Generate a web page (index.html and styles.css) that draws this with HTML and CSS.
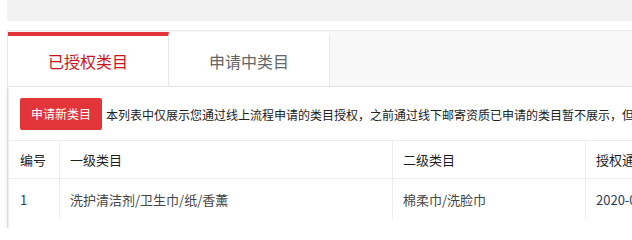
FILE: index.html
```html
<!DOCTYPE html>
<html lang="zh-CN">
<head>
<meta charset="utf-8">
<title>类目管理</title>
<link rel="stylesheet" href="styles.css">
</head>
<body>
<div class="page">
  <div class="topbar"></div>
  <div class="panel">
    <div class="tabs">
      <div class="tab active">已授权类目</div>
      <div class="tab">申请中类目</div>
    </div>
    <div class="content">
      <div class="toolbar">
        <button class="btn">申请新类目</button>
        <span class="desc">本列表中仅展示您通过线上流程申请的类目授权，之前通过线下邮寄资质已申请的类目暂不展示，但不影响您的正常经营。</span>
      </div>
      <div class="grid">
        <div class="cell head first">编号</div>
        <div class="cell head">一级类目</div>
        <div class="cell head">二级类目</div>
        <div class="cell head last">授权通过时间</div>
        <div class="cell body first num">1</div>
        <div class="cell body">洗护清洁剂/卫生巾/纸/香薰</div>
        <div class="cell body">棉柔巾/洗脸巾</div>
        <div class="cell body last num">2020-06-18 10:26:35</div>
      </div>
    </div>
  </div>
</div>
</body>
</html>
```
FILE: styles.css
```css
html, body {
  margin: 0;
  padding: 0;
  background: #ffffff;
  overflow: hidden;
}
body {
  font-family: "Noto Sans CJK SC", "Liberation Sans", sans-serif;
  color: #333333;
}
.page {
  width: 632px;
  height: 228px;
  padding-left: 7px;
  box-sizing: border-box;
  overflow: hidden;
}
.topbar {
  height: 21px;
  background: #f2f2f2;
}
.panel {
  margin-top: 9px;
  border-top: 1px solid #e8e8e8;
  border-left: 1px solid #e8e8e8;
}
.tabs {
  display: flex;
  padding-top: 1px;
  background: #f8f8f8;
  border-bottom: 1px solid #e8e8e8;
}
.tab {
  width: 160px;
  height: 50px;
  border-top: 4px solid #ffffff;
  border-right: 1px solid #e8e8e8;
  background: #ffffff;
  display: flex;
  align-items: center;
  justify-content: center;
  font-size: 16px;
  color: #666666;
}
.tab.active {
  border-top-color: #e1353a;
  color: #c9141b;
}
.content {
  margin-left: 1px;
  box-shadow: -2px 1px 4px rgba(0, 0, 0, 0.09);
  background: #ffffff;
  height: 200px;
}
.toolbar {
  display: flex;
  align-items: center;
  gap: 4px;
  padding: 11px 0 10px 11px;
  white-space: nowrap;
}
.btn {
  flex: none;
  height: 32px;
  padding: 0 11px;
  border: none;
  border-radius: 2px;
  background: #e1353a;
  color: #ffffff;
  font-family: inherit;
  font-size: 12px;
  line-height: 32px;
}
.desc {
  font-size: 12px;
  color: #222222;
}
.grid {
  display: grid;
  grid-template-columns: 51px 333px 193px 260px;
  grid-template-rows: 38px 40px;
  border-top: 1px solid #ececec;
  width: 837px;
}
.cell {
  display: flex;
  align-items: center;
  padding-left: 10px;
  border-right: 1px solid #ececec;
  font-size: 13px;
  white-space: nowrap;
  box-sizing: border-box;
  color: #444444;
}
.cell.first {
  padding-left: 11px;
}
.cell.head {
  border-bottom: 1px solid #ececec;
  color: #1e1e1e;
}
.cell.num {
  color: #2b3d5c;
}
```
